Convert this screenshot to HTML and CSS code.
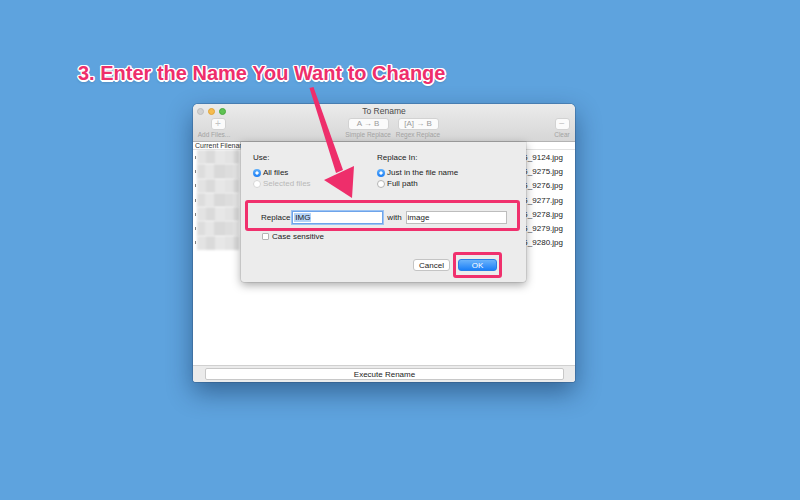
FILE: index.html
```html
<!DOCTYPE html>
<html lang="en">
<head>
    <meta charset="UTF-8">
    <title>To Rename</title>
    <link rel="stylesheet" href="styles.css">
</head>
<body>
    <div class="stage">
        <h1 class="caption">3. Enter the Name You Want to Change</h1>

        <div class="window">
            <div class="chrome">
                <div class="titlebar">
                    <div class="lights">
                        <span class="light light-close"></span>
                        <span class="light light-min"></span>
                        <span class="light light-zoom"></span>
                    </div>
                    <div class="win-title">To Rename</div>
                    <div></div>
                </div>
                <div class="toolbar">
                    <div class="tool tool-add">
                        <span class="tool-btn tool-btn-sq">+</span>
                        <span class="tool-label">Add Files...</span>
                    </div>
                    <div class="tool tool-simple">
                        <span class="tool-btn tool-btn-wide">A &rarr; B</span>
                        <span class="tool-label">Simple Replace</span>
                    </div>
                    <div class="tool tool-regex">
                        <span class="tool-btn tool-btn-wide">[A] &rarr; B</span>
                        <span class="tool-label">Regex Replace</span>
                    </div>
                    <div class="tool tool-clear">
                        <span class="tool-btn tool-btn-sq">&minus;</span>
                        <span class="tool-label">Clear</span>
                    </div>
                </div>
            </div>

            <div class="file-table">
                <div class="thead"><span class="th-first">Current Filename</span></div>
                <div class="row"><span class="tick"></span><span class="thumb"></span><span class="fname">IMG_9124.jpg</span></div>
                <div class="row"><span class="tick"></span><span class="thumb alt"></span><span class="fname">IMG_9275.jpg</span></div>
                <div class="row"><span class="tick"></span><span class="thumb"></span><span class="fname">IMG_9276.jpg</span></div>
                <div class="row"><span class="tick"></span><span class="thumb alt"></span><span class="fname">IMG_9277.jpg</span></div>
                <div class="row"><span class="tick"></span><span class="thumb"></span><span class="fname">IMG_9278.jpg</span></div>
                <div class="row"><span class="tick"></span><span class="thumb alt"></span><span class="fname">IMG_9279.jpg</span></div>
                <div class="row"><span class="tick"></span><span class="thumb"></span><span class="fname">IMG_9280.jpg</span></div>

                <div class="sheet">
                    <div class="options">
                        <div class="opt-col opt-use">
                            <div class="opt-head">Use:</div>
                            <div class="radio-row"><span class="radio on"></span>All files</div>
                            <div class="radio-row disabled"><span class="radio"></span>Selected files</div>
                        </div>
                        <div class="opt-col">
                            <div class="opt-head">Replace In:</div>
                            <div class="radio-row"><span class="radio on"></span>Just in the file name</div>
                            <div class="radio-row"><span class="radio"></span>Full path</div>
                        </div>
                    </div>

                    <div class="replace-row mark">
                        <span class="field-label">Replace</span>
                        <span class="field field-from focused"><span class="selected">IMG</span></span>
                        <span class="field-label field-with">with</span>
                        <span class="field field-to">image</span>
                    </div>

                    <div class="check-row"><span class="checkbox"></span>Case sensitive</div>

                    <div class="sheet-buttons">
                        <button class="btn btn-cancel">Cancel</button>
                        <div class="mark mark-ok">
                            <button class="btn btn-ok">OK</button>
                        </div>
                    </div>
                </div>
            </div>

            <div class="footer">
                <button class="btn-execute">Execute Rename</button>
            </div>
        </div>

        <svg class="pointer" width="800" height="500" viewBox="0 0 800 500">
            <polygon points="309.5,88 313.5,87 343,170 336,173" />
            <polygon points="324,180 354,166 352,198" />
        </svg>
    </div>
</body>
</html>
```

FILE: styles.css
```css
* {
    box-sizing: border-box;
}

body {
    margin: 0;
    background: #5ea3de;
    font-family: "Liberation Sans", Arial, sans-serif;
    color: #222;
}

.stage {
    position: relative;
    width: 800px;
    height: 500px;
    padding-top: 61px;
    overflow: hidden;
}

.caption {
    margin: 0 0 0 78px;
    font-size: 20px;
    line-height: 24px;
    font-weight: bold;
    color: #ee2e6b;
    text-shadow:
        -1px -1px 0 #fff, 1px -1px 0 #fff,
        -1px 1px 0 #fff, 1px 1px 0 #fff,
        0 -1.5px 0 #fff, 0 1.5px 0 #fff,
        -1.5px 0 0 #fff, 1.5px 0 0 #fff,
        0 2px 3px rgba(0, 0, 0, 0.25);
}

/* window */
.window {
    margin: 19px 0 0 193px;
    width: 382px;
    height: 278px;
    background: #fff;
    border-radius: 5px 5px 3px 3px;
    box-shadow: 0 0 0 1px rgba(40, 70, 110, 0.3), 0 10px 26px rgba(0, 25, 60, 0.45);
    display: flex;
    flex-direction: column;
    overflow: hidden;
}

.chrome {
    height: 38px;
    background: linear-gradient(#ebebeb, #d6d6d6);
    border-bottom: 1px solid #b3b3b3;
}

.titlebar {
    height: 14px;
    display: grid;
    grid-template-columns: 1fr auto 1fr;
    align-items: center;
}

.lights {
    display: flex;
    gap: 4px;
    padding-left: 4px;
}

.light {
    width: 7px;
    height: 7px;
    border-radius: 50%;
}

.light-close {
    background: #d1d1d1;
    border: 0.5px solid #bdbdbd;
}

.light-min {
    background: #f6bc4e;
    border: 0.5px solid #dea23a;
}

.light-zoom {
    background: #5fc353;
    border: 0.5px solid #4aa93f;
}

.win-title {
    font-size: 8.5px;
    color: #4a4a4a;
}

.toolbar {
    height: 23px;
    display: flex;
    padding: 0 5px 0 4px;
}

.tool {
    display: flex;
    flex-direction: column;
    align-items: center;
}

.tool-add {
    width: 34px;
}

.tool-simple {
    width: 46px;
    margin-left: 114px;
}

.tool-regex {
    width: 46px;
    margin-left: 4px;
}

.tool-clear {
    width: 16px;
    margin-left: auto;
}

.tool-btn {
    height: 12px;
    background: #fbfbfb;
    border: 1px solid #d2d2d2;
    border-radius: 3px;
    font-size: 8px;
    line-height: 10px;
    color: #9a9a9a;
    text-align: center;
}

.tool-btn-sq {
    width: 15px;
    font-size: 10px;
    color: #c4c4c4;
}

.tool-add .tool-btn-sq {
    margin-left: 8px;
}

.tool-btn-wide {
    width: 41px;
}

.tool-label {
    margin-top: 1px;
    font-size: 6.5px;
    line-height: 8px;
    color: #a3a3a3;
    white-space: nowrap;
}

/* file list */
.file-table {
    flex: 1;
    position: relative;
}

.thead {
    height: 8px;
    font-size: 7px;
    line-height: 7px;
    color: #333;
    border-bottom: 1px solid #e2e2e2;
    white-space: nowrap;
}

.th-first {
    display: inline-block;
    width: 48px;
    padding-left: 2px;
    border-right: 1px solid #d8d8d8;
}

.row {
    height: 14.3px;
    display: flex;
    align-items: center;
}

.tick {
    width: 1px;
    height: 3px;
    margin-left: 2px;
    background: #777;
}

.thumb {
    width: 42px;
    height: 100%;
    margin-left: 1px;
    background: repeating-linear-gradient(90deg, #e3e3e3 0 9px, #dadada 9px 18px, #e7e7e7 18px 28px);
    filter: blur(1px);
}

.thumb.alt {
    background: repeating-linear-gradient(90deg, #dddddd 0 8px, #e6e6e6 8px 17px, #d9d9d9 17px 28px);
}

.fname {
    margin-left: auto;
    padding-right: 12px;
    font-size: 8px;
    color: #222;
}

/* replace sheet */
.sheet {
    position: absolute;
    top: 0;
    left: 48px;
    width: 285px;
    height: 140px;
    padding: 11px 6px 4px 4px;
    background: #ececec;
    border-radius: 0 0 3px 3px;
    box-shadow: 0 3px 10px rgba(0, 0, 0, 0.35), 0 0 0 0.5px rgba(0, 0, 0, 0.15);
    font-size: 8px;
}

.options {
    display: flex;
    padding-left: 8px;
    height: 36px;
}

.opt-use {
    width: 124px;
}

.opt-head {
    line-height: 10px;
    margin-bottom: 4px;
}

.radio-row {
    display: flex;
    align-items: center;
    gap: 2px;
    height: 11px;
}

.radio-row.disabled {
    color: #b8b8b8;
}

.radio {
    width: 8px;
    height: 8px;
    border-radius: 50%;
    background: #fff;
    border: 1px solid #b4b4b4;
}

.radio-row.disabled .radio {
    border-color: #d6d6d6;
}

.radio.on {
    border: none;
    background: radial-gradient(circle, #fff 0 1.4px, transparent 1.8px), linear-gradient(#5fb0fb, #1d7ef5);
}

/* pink callout frames */
.mark {
    border: 3px solid #f0306d;
    border-radius: 3px;
}

.replace-row {
    margin-top: 11px;
    height: 31px;
    display: flex;
    align-items: center;
    padding: 4px 0 0 13px;
}

.field-label {
    margin-right: 2px;
}

.field-with {
    margin: 0 4px 0 4px;
}

.field {
    height: 13px;
    background: #fff;
    border: 1px solid #bdbdbd;
    line-height: 11px;
    padding-left: 1px;
}

.field-from {
    width: 91px;
}

.field-from.focused {
    border-color: #6ea4ea;
    box-shadow: 0 0 0 1px #9cc3f3;
}

.selected {
    background: #b4d3f7;
    padding: 0 1px;
}

.field-to {
    width: 101px;
}

.check-row {
    display: flex;
    align-items: center;
    gap: 3px;
    height: 10px;
    padding-left: 17px;
}

.checkbox {
    width: 7px;
    height: 7px;
    background: #fff;
    border: 1px solid #b4b4b4;
    border-radius: 1px;
}

.sheet-buttons {
    margin-top: 11px;
    display: flex;
    justify-content: flex-end;
    align-items: center;
    gap: 3px;
    padding-right: 18px;
}

.mark-ok {
    padding: 4px 2px;
}

.btn {
    height: 12px;
    padding: 0;
    font-family: "Liberation Sans", Arial, sans-serif;
    font-size: 8px;
    border-radius: 3px;
}

.btn-cancel {
    width: 37px;
    background: #fff;
    color: #222;
    border: 1px solid #c4c4c4;
}

.btn-ok {
    width: 39px;
    background: linear-gradient(#6ab3fb, #1c80f7);
    color: #fff;
    border: 1px solid #2a7fe6;
}

.footer {
    height: 17px;
    background: #ebebeb;
    border-top: 1px solid #d0d0d0;
    padding: 2px 11px 0 12px;
}

.btn-execute {
    display: block;
    width: 100%;
    height: 12px;
    padding: 0;
    background: #fff;
    border: 1px solid #c8c8c8;
    border-radius: 2px;
    font-family: "Liberation Sans", Arial, sans-serif;
    font-size: 8px;
    color: #222;
}

/* callout arrow */
.pointer {
    position: absolute;
    top: 0;
    left: 0;
    pointer-events: none;
}

.pointer polygon {
    fill: #ee2e6b;
}
```
